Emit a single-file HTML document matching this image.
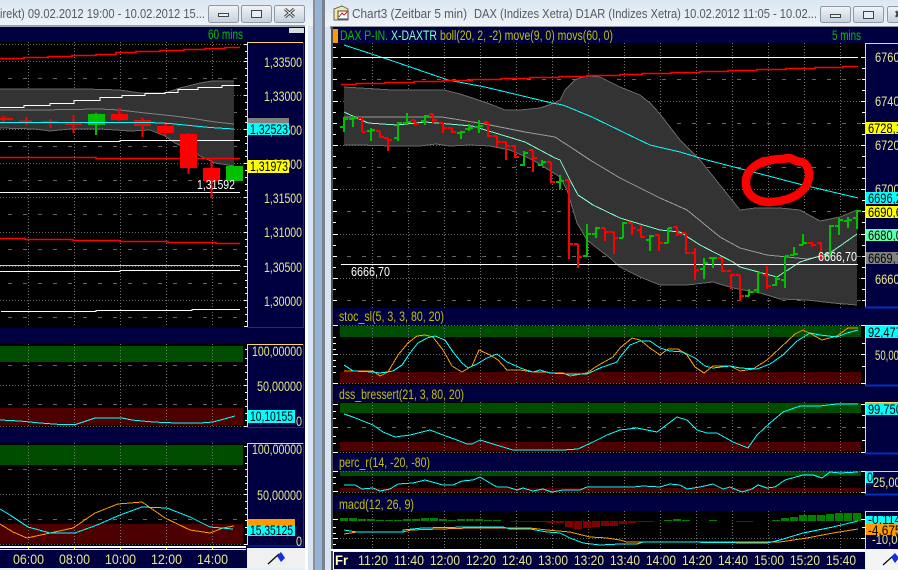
<!DOCTYPE html>
<html><head><meta charset="utf-8">
<style>
html,body{margin:0;padding:0;background:#d8e4f2;width:898px;height:570px;overflow:hidden}
svg{display:block}
path{shape-rendering:crispEdges}
path.s{shape-rendering:auto}
text{font-family:"Liberation Sans",sans-serif;font-size:14px}
.a{fill:#e6e68c;font-size:14px}
.k{fill:#000;font-size:14px}
.t{fill:#555a60;font-size:13px}
.w{fill:#fff;font-size:13px}
.o{fill:#c0c000;font-size:14px}
.g{fill:#00c000;font-size:14px}
</style></head><body>
<svg width="898" height="570" viewBox="0 0 898 570" xmlns="http://www.w3.org/2000/svg">
<defs>
<linearGradient id="tb" x1="0" y1="0" x2="0" y2="1"><stop offset="0" stop-color="#dbe7f3"/><stop offset="1" stop-color="#eef3f8"/></linearGradient>
<linearGradient id="bt" x1="0" y1="0" x2="0" y2="1"><stop offset="0" stop-color="#f2f5f8"/><stop offset="1" stop-color="#c4d0dc"/></linearGradient>
<clipPath id="cl"><rect x="0" y="0" width="305" height="570"/></clipPath>
</defs>
<rect width="898" height="570" fill="#d8e4f2"/>
<rect x="305" y="0" width="3" height="570" fill="#fff"/>
<rect x="313" y="0" width="2" height="570" fill="#8a8f96"/>
<rect x="315" y="0" width="7" height="570" fill="#95b3d4"/>
<rect x="322" y="0" width="3" height="570" fill="#7c8088"/>
<rect x="0" y="0" width="313" height="26" fill="url(#tb)"/>
<rect x="325" y="0" width="573" height="27" fill="url(#tb)"/>
<rect x="0" y="25" width="305" height="2" fill="#9aa2aa"/>
<rect x="330" y="26" width="568" height="3" fill="#8f959c"/>

<text class="t" x="0" y="18" textLength="205" lengthAdjust="spacingAndGlyphs" style="font-size:13px">irekt) 09.02.2012 19:00 - 10.02.2012 15...</text>
<g fill="url(#bt)" stroke="#8e99a6"><rect x="208.500" y="5.500" width="30" height="17" rx="2"/><rect x="241.500" y="5.500" width="30" height="17" rx="2"/><rect x="274.500" y="5.500" width="30" height="17" rx="2"/>
<rect x="820.500" y="6.500" width="30" height="16" rx="2"/><rect x="853.500" y="6.500" width="30" height="16" rx="2"/><rect x="887.500" y="6.500" width="30" height="16" rx="2"/></g>
<g fill="#e8eef4" stroke="#444"><rect x="218.500" y="13.500" width="10" height="3"/><rect x="251.500" y="10.500" width="10" height="7"/><rect x="830.500" y="14.500" width="10" height="3"/><rect x="863.500" y="11.500" width="10" height="7"/></g>
<path class="s" d="M285 9l9 8M294 9l-9 8" stroke="#444" stroke-width="3" fill="none"/>
<path class="s" d="M285 9l9 8M294 9l-9 8" stroke="#eee" stroke-width="1" fill="none"/>
<path class="s" d="M896 11l3 6M896 17l3-6" stroke="#444" stroke-width="2" fill="none"/>

<!-- window icon -->
<path d="M334 9l8-3 6 3v11h-14z" fill="#f4e9a0" stroke="#666"/>
<rect x="338" y="11" width="10" height="8" fill="#fff" stroke="#444"/>
<path d="M339 17l3-4 2 2 3-3" stroke="#d22" fill="none"/>
<text class="t" x="352" y="18" textLength="115" lengthAdjust="spacingAndGlyphs">Chart3 (Zeitbar 5 min)</text>
<text class="t" x="474" y="18" textLength="343" lengthAdjust="spacingAndGlyphs">DAX (Indizes Xetra) D1AR (Indizes Xetra) 10.02.2012 11:05 - 10.02...</text>

<!-- LEFT CHART -->
<g clip-path="url(#cl)">
<rect x="0" y="27" width="305" height="521" fill="#000040"/>
<rect x="289" y="28" width="15" height="5" fill="#d8dce0"/>
<text class="g" x="208" y="39" textLength="35" lengthAdjust="spacingAndGlyphs">60 mins</text>
<rect x="0" y="42" width="247" height="286" fill="#000"/>
<rect x="0" y="344" width="247" height="84" fill="#000"/>
<rect x="0" y="443" width="247" height="103" fill="#000"/>
<rect x="0" y="346" width="243" height="16" fill="#004d00"/>
<rect x="0" y="408" width="243" height="17" fill="#4d0000"/>
<rect x="0" y="445" width="243" height="20" fill="#004d00"/>
<rect x="0" y="524" width="243" height="20" fill="#4d0000"/>
<path d="M28.500 42V327M74.500 42V327M120.500 42V327M166.500 42V327M212.500 42V327M28.500 344V427M74.500 344V427M120.500 344V427M166.500 344V427M212.500 344V427M28.500 443V545M74.500 443V545M120.500 443V545M166.500 443V545M212.500 443V545" stroke="#777" stroke-dasharray="1 2"/>
<path d="M0 44.500H245M0 95.500H245M0 129.500H245M0 163.500H245M0 197.500H245M0 232.500H245M0 266.500H245M0 300.500H245M0 385.500H245M0 426.500H245M0 494.500H245M0 544.500H245M0 61.500H245" stroke="#666" stroke-dasharray="1 2"/>
<path d="M8 78.500H245M8 112.500H245M8 146.500H245M8 180.500H245M8 214.500H245M8 249.500H245M8 283.500H245M8 317.500H245M8 365.500H245M8 404.500H245M8 469.500H245M8 519.500H245" stroke="#666" stroke-dasharray="4 11"/>

<path d="M0 89L85 89L120 90L140 93L165 93L180 88L200 83L212 81L234 81V166L215 163L200 156L190 150L175 143L165 136L150 130L130 131L100 129L70 129L50 131L35 129L0 128Z" fill="#333"/>
<path d="M0 89L85 89L120 90L140 93L165 93L180 88L200 83L212 81L234 81M234 166L215 163L200 156L190 150L175 143L165 136L150 130L130 131L100 129L70 129L50 131L35 129L0 128" fill="none" stroke="#6a6a6a"/>
<path d="M0 110L40 110L100 109L120 110L145 113L165 115L190 118L215 122L234 124" fill="none" stroke="#808080"/>
<path class="s" d="M0 58.500H24V57.500H48V56.500H72V55.500H96V54.500H116V52.500H136V51.500H160V50.500H184V49.500H205V48.500H225V47.500H240" fill="none" stroke="#f00" stroke-width="1.600"/>
<path class="s" d="M0 107.500H24V105.500H50V103.500H74V100.500H100V97.500H122V95.500H145V93.500H165V92.500H178V89.500H198V87.500H222V85.500H240" fill="none" stroke="#fff"/>
<path class="s" d="M0 141.500H120V140.500H240" fill="none" stroke="#fff"/>
<path class="s" d="M0 157.500H96V158.500H240" fill="none" stroke="#f00" stroke-width="1.600"/>
<path class="s" d="M0 192.500H240" stroke="#fff"/>
<path class="s" d="M0 238.500H25V239.500H73V240.500H120V241.500H168V242.500H216V243.500H240" fill="none" stroke="#f00" stroke-width="1.600"/>
<path class="s" d="M0 265.500H240" stroke="#b0e0a0"/>
<path class="s" d="M0 271.500H120V270.500H240" fill="none" stroke="#fff"/>
<path class="s" d="M1 311.500H96V310.500H192V309.500H240" fill="none" stroke="#fff"/>
<path d="M3.500 116V122M26.500 117V125M50.500 119V128M73.500 115V133M119.500 108V121M142.500 118V137M165.500 122V136M188.500 133V174M211.500 160V198" stroke="#f00" stroke-width="2" fill="none"/>
<path d="M96 113V135" stroke="#00c000" stroke-width="2"/>
<g fill="#f00"><rect x="0" y="118" width="13" height="2"/><rect x="19" y="120.500" width="13" height="1.500"/><rect x="42" y="121" width="16" height="1.500"/><rect x="65" y="123" width="17" height="2"/><rect x="111" y="114" width="17" height="6"/><rect x="134" y="120" width="17" height="6"/><rect x="157" y="126" width="17" height="7"/><rect x="180" y="134" width="17" height="34"/><rect x="203" y="168" width="17" height="13"/></g>
<g fill="#00c000"><rect x="88" y="114" width="17" height="11"/><rect x="226" y="166" width="17" height="15"/></g>
<path d="M0 122.500H150L170 123.500L190 125.500L210 127.500L234 129" fill="none" stroke="#00ffff"/>
<text class="w" x="197" y="189" textLength="38" lengthAdjust="spacingAndGlyphs">1,31592</text>

<path d="M0 420L20 421L40 423L63 424.700L75 424.700L95 418L122 418L132 420L153 422L177 423L200 423L213 422L235 416" fill="none" stroke="#00ffff"/>
<path d="M0 524L13 532L27 538L50 533L73 528L95 513L118 504L142 502L165 518L190 530L210 533L223 528L234 526" fill="none" stroke="#ff9a00"/>
<path d="M0 509L10 515L28 527L50 533L75 533L97 525L120 515L142 507L167 508L190 517L210 527L233 529" fill="none" stroke="#00ffff"/>

<!-- left axis -->
<path d="M247.500 327V42.500H303M247.500 427V344.500H303M247.500 545V443.500H303" fill="none" stroke="#ffd860"/>
<path d="M303.500 42V327.500H247M303.500 344V427.500H247M303.500 443V546H247" fill="none" stroke="#0030c0"/>
<path d="M244 44.500h3M245 51.500h2M245 58.500h2M244 61.500h3M245 68.500h2M245 75.500h2M245 82.500h2M245 88.500h2M244 95.500h3M245 102.500h2M245 109.500h2M245 116.500h2M245 122.500h2M244 129.500h3M245 136.500h2M245 143.500h2M245 150.500h2M245 156.500h2M244 163.500h3M245 170.500h2M245 177.500h2M245 184.500h2M245 190.500h2M244 197.500h3M245 204.500h2M245 211.500h2M245 218.500h2M245 225.500h2M244 232.500h3M245 239.500h2M245 246.500h2M245 253.500h2M245 259.500h2M244 266.500h3M245 273.500h2M245 280.500h2M245 287.500h2M245 293.500h2M244 300.500h3M245 307.500h2M245 314.500h2M245 321.500h2M244 326.500h3M245 349.500h2M245 358.500h2M245 365.500h2M245 372.500h2M245 379.500h2M244 385.500h3M245 392.500h2M245 399.500h2M245 406.500h2M245 413.500h2M245 420.500h2M244 426.500h3M244 446.500h3M245 456.500h2M245 463.500h2M245 469.500h2M245 476.500h2M245 483.500h2M245 489.500h2M244 494.500h3M245 501.500h2M245 508.500h2M245 514.500h2M245 520.500h2M245 527.500h2M245 534.500h2M244 544.500h3" stroke="#fff"/>
<g class="ax">
<text class="a" x="264" y="67" textLength="38" lengthAdjust="spacingAndGlyphs">1,33500</text>
<text class="a" x="264" y="101" textLength="38" lengthAdjust="spacingAndGlyphs">1,33000</text>
<text class="a" x="264" y="169" textLength="38" lengthAdjust="spacingAndGlyphs">1,32000</text>
<text class="a" x="264" y="135" textLength="38" lengthAdjust="spacingAndGlyphs">1,32500</text>
<text class="a" x="264" y="203" textLength="38" lengthAdjust="spacingAndGlyphs">1,31500</text>
<text class="a" x="264" y="237" textLength="38" lengthAdjust="spacingAndGlyphs">1,31000</text>
<text class="a" x="264" y="272" textLength="38" lengthAdjust="spacingAndGlyphs">1,30500</text>
<text class="a" x="264" y="306" textLength="38" lengthAdjust="spacingAndGlyphs">1,30000</text>
<text class="a" x="252" y="356" textLength="50" lengthAdjust="spacingAndGlyphs">100,00000</text>
<text class="a" x="257" y="391" textLength="45" lengthAdjust="spacingAndGlyphs">50,00000</text>
<text class="a" x="296" y="426" textLength="6" lengthAdjust="spacingAndGlyphs">0</text>
<text class="a" x="252" y="454" textLength="50" lengthAdjust="spacingAndGlyphs">100,00000</text>
<text class="a" x="257" y="500" textLength="45" lengthAdjust="spacingAndGlyphs">50,00000</text>
<text class="a" x="296" y="546" textLength="6" lengthAdjust="spacingAndGlyphs">0</text>
</g>
<rect x="248" y="118" width="41" height="6" fill="#808080"/>
<rect x="248" y="123" width="41" height="12" fill="#00ffff"/>
<text class="k" x="250" y="134" textLength="38" lengthAdjust="spacingAndGlyphs">1,32523</text>
<rect x="248" y="160" width="41" height="13" fill="#ffff00"/>
<text class="k" x="250" y="171" textLength="38" lengthAdjust="spacingAndGlyphs">1,31973</text>
<rect x="248" y="410" width="47" height="13" fill="#00ffff"/>
<text class="k" x="250" y="421" textLength="43" lengthAdjust="spacingAndGlyphs">10,10155</text>
<rect x="248" y="519" width="47" height="7" fill="#ff9a00"/>
<rect x="248" y="525" width="47" height="11" fill="#00ffff"/>
<text class="k" x="250" y="535" textLength="43" lengthAdjust="spacingAndGlyphs">15,35125</text>

<!-- left time axis -->
<rect x="0" y="546" width="247" height="22" fill="#000040"/>
<rect x="0" y="546" width="246" height="2" fill="#fff"/>
<rect x="0" y="549" width="246" height="1" fill="#ffff80"/>
<path d="M28.500 546v4M74.500 546v4M120.500 546v4M166.500 546v4M212.500 546v4" stroke="#ffff80"/>
<text class="a" x="13" y="564" textLength="31" lengthAdjust="spacingAndGlyphs">06:00</text>
<text class="a" x="59" y="564" textLength="31" lengthAdjust="spacingAndGlyphs">08:00</text>
<text class="a" x="105" y="564" textLength="31" lengthAdjust="spacingAndGlyphs">10:00</text>
<text class="a" x="151" y="564" textLength="31" lengthAdjust="spacingAndGlyphs">12:00</text>
<text class="a" x="197" y="564" textLength="31" lengthAdjust="spacingAndGlyphs">14:00</text>
<rect x="247" y="548" width="58" height="20" fill="#f0f0f0"/>
<path class="s" d="M268 564L279 554" stroke="#000" stroke-width="1.200"/>
<path class="s" d="M277 556L281 552L285 558L281 562Z" fill="#1030e0"/>
</g>
<rect x="0" y="568" width="305" height="2" fill="#e6eef6"/>

<!-- RIGHT CHART -->
<rect x="331" y="27" width="567" height="522" fill="#000040"/>
<rect x="331" y="27" width="2" height="543" fill="#505058"/>
<rect x="333" y="29" width="5" height="14" fill="#ff9900"/>
<text class="g" x="340" y="40" textLength="48" lengthAdjust="spacingAndGlyphs">DAX P-IN.</text>
<text x="391" y="40" fill="#80ffc0" textLength="46" lengthAdjust="spacingAndGlyphs">X-DAXTR</text>
<text class="o" x="440" y="40" textLength="173" lengthAdjust="spacingAndGlyphs">boll(20, 2, -2) move(9, 0) movs(60, 0)</text>
<text class="g" x="832" y="40" textLength="29" lengthAdjust="spacingAndGlyphs">5 mins</text>

<rect x="333" y="43" width="532" height="265" fill="#000"/>
<rect x="333" y="325" width="532" height="60" fill="#000"/>
<rect x="333" y="402" width="532" height="52" fill="#000"/>
<rect x="333" y="471" width="532" height="24" fill="#000"/>
<rect x="333" y="511" width="532" height="38" fill="#000"/>

<g fill="#004d00"><rect x="340" y="326" width="521" height="11"/><rect x="340" y="403" width="521" height="10"/><rect x="340" y="471" width="521" height="5"/></g>
<g fill="#4d0000"><rect x="340" y="372" width="521" height="11"/><rect x="340" y="442" width="521" height="9"/><rect x="340" y="488" width="521" height="4"/></g>

<path d="M372.500 43V308M408.500 43V308M444.500 43V308M480.500 43V308M516.500 43V308M552.500 43V308M588.500 43V308M624.500 43V308M660.500 43V308M696.500 43V308M732.500 43V308M768.500 43V308M804.500 43V308M840.500 43V308
M372.500 325V385M408.500 325V385M444.500 325V385M480.500 325V385M516.500 325V385M552.500 325V385M588.500 325V385M624.500 325V385M660.500 325V385M696.500 325V385M732.500 325V385M768.500 325V385M804.500 325V385M840.500 325V385
M372.500 402V453M408.500 402V453M444.500 402V453M480.500 402V453M516.500 402V453M552.500 402V453M588.500 402V453M624.500 402V453M660.500 402V453M696.500 402V453M732.500 402V453M768.500 402V453M804.500 402V453M840.500 402V453
M372.500 471V495M408.500 471V495M444.500 471V495M480.500 471V495M516.500 471V495M552.500 471V495M588.500 471V495M624.500 471V495M660.500 471V495M696.500 471V495M732.500 471V495M768.500 471V495M804.500 471V495M840.500 471V495
M372.500 511V549M408.500 511V549M444.500 511V549M480.500 511V549M516.500 511V549M552.500 511V549M588.500 511V549M624.500 511V549M660.500 511V549M696.500 511V549M732.500 511V549M768.500 511V549M804.500 511V549M840.500 511V549" stroke="#777" stroke-dasharray="1 2"/>
<path d="M340 101.500H861M340 145.500H861M340 189.500H861M340 234.500H861M340 278.500H861M340 354.500H861M340 383.500H861M340 452.500H861M340 471.500H861M340 492.500H861M340 538.500H861M340 325.500H861" stroke="#666" stroke-dasharray="1 2"/>
<path d="M347 79.500H861M347 123.500H861M347 167.500H861M347 211.500H861M347 256.500H861M347 300.500H861M347 427.500H861" stroke="#666" stroke-dasharray="4 11"/>

<!-- band -->
<path d="M344 87L360 88L392 90L444 90L460 94L490 104L505 110L520 110L540 108L552 104L560 100L565 90L575 80L582 77L590 76L600 77L620 87L640 95L650 103L660 114L680 140L700 160L740 210L755 208L780 208L800 210L820 221L840 217L857 210V305L833 303L807 300L780 299L760 293L733 288L713 282L687 285L660 285L640 277L620 267L610 258L597 248L587 240L577 223L567 190L560 177L533 160L510 150L490 146L470 145L450 146L436 144L420 146L392 146L360 145L344 145Z" fill="#333"/>
<path d="M344 87L360 88L392 90L444 90L460 94L490 104L505 110L520 110L540 108L552 104L560 100L565 90L575 80L582 77L590 76L600 77L620 87L640 95L650 103L660 114L680 140L700 160L740 210L755 208L780 208L800 210L820 221L840 217L857 210M857 305L833 303L807 300L780 299L760 293L733 288L713 282L687 285L660 285L640 277L620 267L610 258L597 248L587 240L577 223L567 190L560 177L533 160L510 150L490 146L470 145L450 146L436 144L420 146L392 146L360 145L344 145" fill="none" stroke="#6a6a6a"/>
<path d="M344 117L400 117L442 117L485 124L525 132L555 137L575 150L590 160L620 178L660 198L687 210L720 237L740 248L767 255L807 259L827 255L840 246L857 234" fill="none" stroke="#9a9a9a"/>
<path d="M344 112L368 123L397 125L425 122L472 126L502 135L525 142L555 158L560 160L570 180L578 195L593 205L620 218L660 230L680 232L700 245L733 262L740 267L777 277L800 262L830 253L857 234" fill="none" stroke="#80ffc8"/>
<path d="M344 45L387 59L448 80L485 87L552 103L563 105L592 117L625 133L650 145L680 152L707 160L803 185L858 198" fill="none" stroke="#00ffff"/>
<path class="s" d="M341 57.500H858M341 264.500H858" stroke="#fff"/>
<path class="s" d="M341 84.500H356V83.500H385V82.500H414V81.500H443V80.500H472V79.500H501V78.500H530V77.500H559V76.500H587V75.500H620V74.500H642V73.500H671V72.500H700V71.500H728V70.500H757V69.500H786V68.500H815V67.500H843V66.500H858" fill="none" stroke="#f00" stroke-width="1.600"/>

<!-- bars -->
<path fill="none" stroke="#f00" stroke-width="2" d="M362 118V132M358 118H362M362 132H366M380 131V138M376 131H380M380 137H384M388 138V151M384 138H388M388 140H392M415 120V125M411 120H415M415 124H419M433 114V124M429 114H433M433 120H437M443 123V133M439 123H443M443 128H447M452 128V133M448 128H452M452 132H456M488 122V137M484 122H488M488 136H492M497 136V147M493 136H497M497 142H501M506 142V160M502 142H506M506 146H510M515 145V158M511 146H515M515 157H519M533 150V172M529 150H533M533 158H537M551 162V183M547 162H551M551 182H555M569 180V259M565 180H569M569 244H573M578 244V268M574 244H578M578 257H582M605 228V241M601 228H605M605 232H609M614 232V254M610 232H614M614 238H618M632 223V235M628 223H632M632 228H636M641 225V238M637 230H641M641 237H645M659 235V251M655 235H659M659 243H663M677 227V236M673 227H677M677 234H681M686 233V254M682 233H686M686 253H690M695 248V280M691 253H695M695 270H699M722 258V272M718 258H722M722 271H726M731 274V289M727 271H731M731 275H735M740 275V301M736 275H740M740 296H744M767 266V289M763 275H767M767 286H771M812 242V247M808 243H812M812 245H816M821 242V260M817 243H821M821 256H825"/>
<path fill="none" stroke="#00c000" stroke-width="2" d="M344 117V132M340 127H344M344 119H348M353 116V127M349 119H353M353 118H357M371 128V141M367 131H371M371 130H375M398 122V141M394 138H398M398 123H402M407 113V124M403 123H407M407 122H411M425 115V125M421 121H425M425 116H429M461 131V139M457 133H461M461 132H465M469 124V131M465 129H469M469 128H473M479 120V133M475 127H479M479 126H483M524 151V166M520 165H524M524 153H528M542 160V166M538 165H542M542 162H546M560 175V189M556 182H560M560 181H564M587 224V257M583 256H587M587 234H591M596 227V238M592 234H596M596 228H600M623 222V238M619 238H623M623 223H627M650 235V251M646 240H650M650 236H654M668 228V243M664 243H668M668 228H672M704 258V279M700 269H704M704 263H708M713 257V268M709 258H713M713 258H717M749 289V296M745 296H749M749 292H753M758 272V293M754 290H758M758 273H762M776 276V286M772 285H776M776 279H780M785 256V288M781 280H785M785 256H789M794 247V255M790 255H794M794 254H798M803 234V245M799 245H803M803 243H807M830 225V256M826 256H830M830 226H834M839 218V235M835 226H839M839 220H843M848 217V228M844 221H848M848 220H852M857 210V229M853 218H857M857 211H861"/>

<text class="w" x="351" y="276" textLength="39" lengthAdjust="spacingAndGlyphs">6666,70</text>
<text class="w" x="818" y="261" textLength="39" lengthAdjust="spacingAndGlyphs">6666,70</text>

<!-- scribble -->
<path class="s" d="M762 163C772 158 780 160 788 158C794 158 792 161 802 162C810 166 811 176 806 186C800 196 785 202 768 202C752 201 745 192 746 180C747 171 755 165 764 161" fill="none" stroke="#f00" stroke-width="8.500" stroke-linecap="round"/>

<!-- indicator headers -->
<text class="o" x="339" y="321" textLength="105" lengthAdjust="spacingAndGlyphs">stoc_sl(5, 3, 3, 80, 20)</text>
<text class="o" x="339" y="399" textLength="125" lengthAdjust="spacingAndGlyphs">dss_bressert(21, 3, 80, 20)</text>
<text class="o" x="339" y="467" textLength="91" lengthAdjust="spacingAndGlyphs">perc_r(14, -20, -80)</text>
<text class="o" x="339" y="509" textLength="75" lengthAdjust="spacingAndGlyphs">macd(12, 26, 9)</text>

<!-- stoc -->
<path d="M344 371L373 371L380 376L388 372L398 355L408 343L417 336L425 335L433 337L443 350L452 366L462 372L472 366L479 350L490 355L498 360L507 370L520 370L533 372L547 372L550 373L563 373L570 376L587 373L597 366L613 357L620 348L632 338L640 340L650 348L660 355L668 349L678 349L687 355L695 367L704 373L713 366L730 366L740 371L753 369L767 360L780 348L795 334L803 330L813 335L822 340L837 336L848 328L858 328" fill="none" stroke="#ff9a00"/>
<path d="M344 365L353 371L373 372L380 373L393 371L402 365L410 353L418 343L427 338L435 336L445 340L453 352L462 363L468 368L477 364L487 358L497 354L507 362L523 369L533 372L540 370L550 373L570 374L587 374L600 368L617 362L620 357L630 345L640 341L650 341L660 348L670 351L683 352L695 358L705 366L713 368L730 366L740 368L757 369L770 364L783 355L797 341L810 333L820 335L837 337L847 333L858 330" fill="none" stroke="#00ffff"/>
<!-- dss -->
<path d="M344 414L353 417L373 425L383 432L395 437L410 435L430 430L443 435L457 440L467 444L472 444L480 440L493 444L513 450L563 450L578 449L593 442L607 435L620 430L637 428L657 432L677 417L687 420L697 430L707 433L717 433L733 442L748 448L757 435L770 423L783 412L800 406L820 406L837 404L858 404" fill="none" stroke="#00ffff"/>
<!-- perc -->
<path d="M344 485L355 485L362 489L373 488L380 491L390 489L398 484L413 483L425 480L443 485L453 485L462 481L473 480L480 477L490 483L497 487L507 487L517 490L523 488L533 491L543 489L552 492L563 490L580 490L587 487L620 487L633 487L643 486L660 487L670 484L680 485L687 489L700 487L713 484L723 489L730 487L742 492L752 489L758 485L767 488L775 487L785 480L803 475L813 475L822 478L830 472L840 473L858 472" fill="none" stroke="#00ffff"/>
<!-- macd hist -->
<g fill="#008000"><rect x="340" y="518" width="8" height="3"/><rect x="349" y="518" width="8" height="3"/><rect x="358" y="519" width="8" height="2"/><rect x="367" y="519" width="8" height="2"/><rect x="376" y="520" width="8" height="1"/><rect x="385" y="520" width="8" height="1"/><rect x="394" y="520" width="8" height="1"/><rect x="403" y="519" width="8" height="2"/><rect x="412" y="519" width="8" height="2"/><rect x="421" y="518" width="8" height="3"/><rect x="430" y="518" width="8" height="3"/><rect x="439" y="519" width="8" height="2"/><rect x="448" y="520" width="8" height="1"/><rect x="457" y="519" width="8" height="2"/><rect x="466" y="519" width="8" height="2"/><rect x="475" y="519" width="8" height="2"/><rect x="484" y="520" width="8" height="1"/><rect x="493" y="520" width="8" height="1"/>
<rect x="664" y="520" width="8" height="1"/><rect x="673" y="519" width="8" height="2"/><rect x="682" y="520" width="8" height="1"/><rect x="709" y="520" width="8" height="1"/><rect x="772" y="520" width="8" height="1"/><rect x="781" y="518" width="8" height="3"/><rect x="790" y="517" width="8" height="4"/><rect x="799" y="515" width="8" height="6"/><rect x="808" y="515" width="8" height="6"/><rect x="817" y="515" width="8" height="6"/><rect x="826" y="514" width="8" height="7"/><rect x="835" y="513" width="8" height="8"/><rect x="844" y="513" width="8" height="8"/><rect x="853" y="513" width="8" height="8"/></g>
<g fill="#800000"><rect x="511" y="521" width="27" height="1"/><rect x="538" y="521" width="18" height="1"/><rect x="547" y="521" width="8" height="2"/><rect x="556" y="521" width="8" height="2"/><rect x="565" y="521" width="8" height="6"/><rect x="574" y="521" width="8" height="8"/><rect x="583" y="521" width="8" height="7"/><rect x="592" y="521" width="8" height="6"/><rect x="601" y="521" width="8" height="5"/><rect x="610" y="521" width="8" height="5"/><rect x="619" y="521" width="8" height="3"/><rect x="628" y="521" width="8" height="2"/><rect x="637" y="521" width="17" height="1"/><rect x="736" y="521" width="17" height="1"/></g>
<path d="M344 534L357 532L403 532L411 530L440 529L470 528L530 528L547 530L570 532L590 537L607 538L620 540L627 542L780 542L807 538L833 533L858 529" fill="none" stroke="#ff9a00"/>
<path d="M344 530L357 532L403 532L403 530L422 528L467 527L503 527L510 529L530 529L547 532L560 533L570 538L583 543L600 545L620 544L637 544L643 542L667 542L683 542L753 543L767 543L780 540L803 533L833 527L858 521" fill="none" stroke="#00ffff"/>

<!-- left ticks on right chart -->
<path d="M333 47.500h3M333 57.500h5M333 68.500h3M333 79.500h4M333 90.500h3M333 101.500h5M333 112.500h3M333 123.500h4M333 134.500h3M333 145.500h5M333 156.500h3M333 167.500h4M333 178.500h3M333 189.500h5M333 200.500h3M333 211.500h4M333 222.500h3M333 234.500h5M333 245.500h3M333 256.500h4M333 267.500h3M333 278.500h5M333 289.500h3M333 300.500h4M333 325.500h5M333 337.500h3M333 343.500h3M333 349.500h3M333 354.500h5M333 360.500h3M333 366.500h3M333 372.500h3M333 383.500h5M333 404.500h5M333 411.500h3M333 418.500h3M333 427.500h5M333 436.500h3M333 443.500h3M333 452.500h5M333 471.500h5M333 477.500h3M333 483.500h3M333 491.500h5M333 519.500h5M333 527.500h3M333 533.500h3M333 538.500h5M333 544.500h3" stroke="#fff"/>

<!-- right axis -->
<rect x="865" y="43" width="33" height="265" fill="#000040"/>
<path d="M865.500 307V43.500H898M865.500 385V325.500H898M865.500 453V402.500H898M865.500 494V471.500H898M865.500 549V511.500H898" fill="none" stroke="#ffd860"/>
<path d="M865 307.500H898M865 385.500H898M865 453.500H898M865 494.500H898" stroke="#0030c0" stroke-width="2"/>
<path d="M861 57.500h4M862 68.500h3M862 79.500h3M862 90.500h3M861 101.500h4M862 112.500h3M862 123.500h3M862 134.500h3M861 145.500h4M862 156.500h3M862 167.500h3M862 178.500h3M861 189.500h4M862 200.500h3M862 211.500h3M862 222.500h3M861 234.500h4M862 245.500h3M862 256.500h3M862 267.500h3M861 278.500h4M862 289.500h3M862 300.500h3M861 325.500h4M861 354.500h4M862 343.500h3M862 366.500h3M861 383.500h4M861 404.500h4M862 415.500h3M862 427.500h3M862 440.500h3M861 452.500h4M861 471.500h4M861 492.500h4M861 519.500h4M861 538.500h4M862 527.500h3" stroke="#fff"/>
<text class="a" x="875" y="62" textLength="40" lengthAdjust="spacingAndGlyphs">6760,00</text>
<text class="a" x="875" y="106" textLength="40" lengthAdjust="spacingAndGlyphs">6740,00</text>
<text class="a" x="875" y="150" textLength="40" lengthAdjust="spacingAndGlyphs">6720,00</text>
<text class="a" x="875" y="194" textLength="40" lengthAdjust="spacingAndGlyphs">6700,00</text>
<text class="a" x="875" y="284" textLength="40" lengthAdjust="spacingAndGlyphs">6660,00</text>
<text class="a" x="875" y="360" textLength="40" lengthAdjust="spacingAndGlyphs">50,00000</text>
<text class="a" x="873" y="487" textLength="40" lengthAdjust="spacingAndGlyphs">25,0000</text>
<text class="a" x="872" y="544" textLength="44" lengthAdjust="spacingAndGlyphs">-10,0000</text>
<rect x="866" y="122" width="32" height="12" fill="#ffff00"/><text class="k" x="868" y="133" textLength="40" lengthAdjust="spacingAndGlyphs">6728,10</text>
<rect x="866" y="192" width="32" height="12" fill="#00ffff"/><text class="k" x="868" y="203" textLength="40" lengthAdjust="spacingAndGlyphs">6696,20</text>
<rect x="866" y="206" width="32" height="12" fill="#ffff00"/><text class="k" x="868" y="217" textLength="40" lengthAdjust="spacingAndGlyphs">6690,60</text>
<rect x="866" y="229" width="32" height="12" fill="#60ffb0"/><text class="k" x="868" y="240" textLength="40" lengthAdjust="spacingAndGlyphs">6680,00</text>
<rect x="866" y="252" width="32" height="12" fill="#808080"/><text class="k" x="868" y="263" textLength="40" lengthAdjust="spacingAndGlyphs">6669,70</text>
<rect x="866" y="326" width="32" height="12" fill="#00ffff"/><text class="k" x="868" y="337" textLength="40" lengthAdjust="spacingAndGlyphs">92,4770</text>
<rect x="866" y="403" width="32" height="12" fill="#00ffff"/><text class="k" x="868" y="414" textLength="40" lengthAdjust="spacingAndGlyphs">99,7500</text>
<rect x="866" y="471" width="7" height="12" fill="#00ffff"/><text class="k" x="867" y="482" textLength="6" lengthAdjust="spacingAndGlyphs">0</text>
<rect x="866" y="516" width="32" height="8" fill="#00ffff"/><text class="k" x="868" y="524" textLength="40" lengthAdjust="spacingAndGlyphs">-0,1140</text>
<rect x="866" y="524" width="32" height="11" fill="#ff9a00"/><text class="k" x="868" y="535" textLength="40" lengthAdjust="spacingAndGlyphs">-4,6750</text>

<!-- right time axis -->
<rect x="331" y="549" width="534" height="2" fill="#fff"/>
<rect x="333" y="551" width="532" height="18" fill="#000040"/>
<rect x="333" y="551" width="532" height="1" fill="#ffff80"/>
<rect x="333" y="551" width="1" height="18" fill="#fff"/>
<text x="335" y="565" fill="#ffffc0" style="font-weight:bold;font-size:14px" textLength="13" lengthAdjust="spacingAndGlyphs">Fr</text>
<text class="a" x="358" y="565" textLength="30" lengthAdjust="spacingAndGlyphs">11:20</text>
<text class="a" x="394" y="565" textLength="30" lengthAdjust="spacingAndGlyphs">11:40</text>
<text class="a" x="430" y="565" textLength="30" lengthAdjust="spacingAndGlyphs">12:00</text>
<text class="a" x="466" y="565" textLength="30" lengthAdjust="spacingAndGlyphs">12:20</text>
<text class="a" x="502" y="565" textLength="30" lengthAdjust="spacingAndGlyphs">12:40</text>
<text class="a" x="538" y="565" textLength="30" lengthAdjust="spacingAndGlyphs">13:00</text>
<text class="a" x="574" y="565" textLength="30" lengthAdjust="spacingAndGlyphs">13:20</text>
<text class="a" x="610" y="565" textLength="30" lengthAdjust="spacingAndGlyphs">13:40</text>
<text class="a" x="646" y="565" textLength="30" lengthAdjust="spacingAndGlyphs">14:00</text>
<text class="a" x="682" y="565" textLength="30" lengthAdjust="spacingAndGlyphs">14:20</text>
<text class="a" x="718" y="565" textLength="30" lengthAdjust="spacingAndGlyphs">14:40</text>
<text class="a" x="754" y="565" textLength="30" lengthAdjust="spacingAndGlyphs">15:00</text>
<text class="a" x="790" y="565" textLength="30" lengthAdjust="spacingAndGlyphs">15:20</text>
<text class="a" x="826" y="565" textLength="30" lengthAdjust="spacingAndGlyphs">15:40</text>
<rect x="865" y="549" width="33" height="21" fill="#f4f4f4"/>
<path class="s" d="M883 565L893 556" stroke="#000" stroke-width="1.200"/>
<path class="s" d="M891 557L895 553L899 558L895 563Z" fill="#1030e0"/>
<rect x="333" y="569" width="532" height="1" fill="#dfe8f2"/>
</svg>
</body></html>
